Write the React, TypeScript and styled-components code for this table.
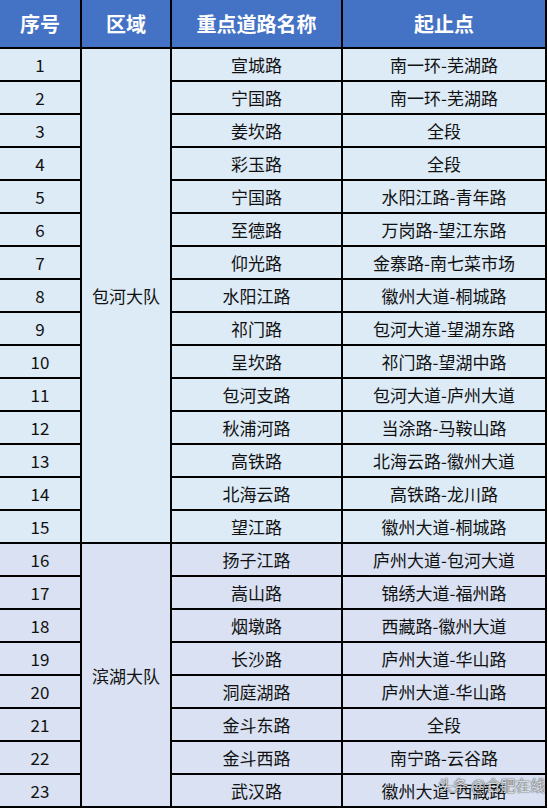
import React from "react";
import styled, { createGlobalStyle } from "styled-components";

const Global = createGlobalStyle`
  html, body { margin: 0; padding: 0; background: #ffffff; }
  body { font-family: "Noto Sans CJK SC", "Noto Sans", sans-serif; }
`;

const Grid = styled.div`
  position: relative;
  display: grid;
  grid-template-columns: 80px 88px 169px 202px;
  grid-template-rows: 47px repeat(23, 31px);
  gap: 2px;
  padding: 0 2px 2px 0;
  width: 547px;
  box-sizing: border-box;
  background: #000000;
`;

const HeadCell = styled.div`
  display: flex;
  align-items: center;
  justify-content: center;
  background: #4472c4;
  color: #ffffff;
  font-weight: 700;
  font-size: 20px;
`;

const Cell = styled.div<{ $group: number }>`
  display: flex;
  align-items: center;
  justify-content: center;
  background: ${(p) => (p.$group === 0 ? "#ddebf7" : "#d9e1f2")};
  color: #111111;
  font-size: 17px;
  white-space: nowrap;
`;

const RegionCell = styled(Cell)<{ $start: number; $span: number }>`
  grid-column: 2;
  grid-row: ${(p) => `${p.$start} / span ${p.$span}`};
`;

const Watermark = styled.div`
  position: absolute;
  left: 438px;
  top: 774px;
  font-size: 15px;
  color: rgba(235, 235, 235, 0.92);
  text-shadow: 0 0 1px rgba(0, 0, 0, 0.8), 0 0 2px rgba(0, 0, 0, 0.45);
  white-space: nowrap;
  pointer-events: none;
`;

const rows: [string, string][] = [
  ["宣城路", "南一环-芜湖路"],
  ["宁国路", "南一环-芜湖路"],
  ["姜坎路", "全段"],
  ["彩玉路", "全段"],
  ["宁国路", "水阳江路-青年路"],
  ["至德路", "万岗路-望江东路"],
  ["仰光路", "金寨路-南七菜市场"],
  ["水阳江路", "徽州大道-桐城路"],
  ["祁门路", "包河大道-望湖东路"],
  ["呈坎路", "祁门路-望湖中路"],
  ["包河支路", "包河大道-庐州大道"],
  ["秋浦河路", "当涂路-马鞍山路"],
  ["高铁路", "北海云路-徽州大道"],
  ["北海云路", "高铁路-龙川路"],
  ["望江路", "徽州大道-桐城路"],
  ["扬子江路", "庐州大道-包河大道"],
  ["嵩山路", "锦绣大道-福州路"],
  ["烟墩路", "西藏路-徽州大道"],
  ["长沙路", "庐州大道-华山路"],
  ["洞庭湖路", "庐州大道-华山路"],
  ["金斗东路", "全段"],
  ["金斗西路", "南宁路-云谷路"],
  ["武汉路", "徽州大道-西藏路"],
];

export default function App() {
  return (
    <>
      <Global />
      <Grid>
        <HeadCell>序号</HeadCell>
        <HeadCell>区域</HeadCell>
        <HeadCell>重点道路名称</HeadCell>
        <HeadCell>起止点</HeadCell>
        <RegionCell $group={0} $start={2} $span={15}>包河大队</RegionCell>
        <RegionCell $group={1} $start={17} $span={8}>滨湖大队</RegionCell>
        {rows.map(([road, range], i) => {
          const g = i < 15 ? 0 : 1;
          const r = i + 2;
          return (
            <React.Fragment key={i}>
              <Cell $group={g} style={{ gridRow: r, gridColumn: 1 }}>{i + 1}</Cell>
              <Cell $group={g} style={{ gridRow: r, gridColumn: 3 }}>{road}</Cell>
              <Cell $group={g} style={{ gridRow: r, gridColumn: 4 }}>{range}</Cell>
            </React.Fragment>
          );
        })}
        <Watermark>头条 @合肥在线</Watermark>
      </Grid>
    </>
  );
}
